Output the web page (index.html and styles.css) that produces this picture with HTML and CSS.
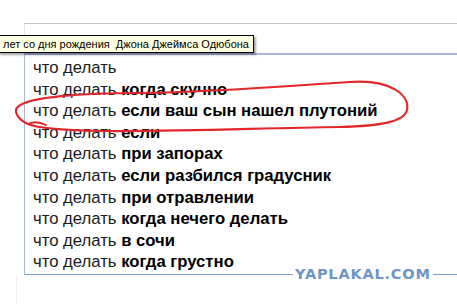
FILE: index.html
```html
<!DOCTYPE html>
<html lang="ru">
<head>
  <meta charset="UTF-8">
  <title>что делать</title>
  <link rel="stylesheet" href="styles.css">
</head>
<body>
  <div class="page">
    <div class="field"></div>
    <ul class="suggest">
      <li>что делать</li>
      <li>что делать <b>когда скучно</b></li>
      <li>что делать <b>если ваш сын нашел плутоний</b></li>
      <li>что делать <b>если</b></li>
      <li>что делать <b>при запорах</b></li>
      <li>что делать <b>если разбился градусник</b></li>
      <li>что делать <b>при отравлении</b></li>
      <li>что делать <b>когда нечего делать</b></li>
      <li>что делать <b>в сочи</b></li>
      <li>что делать <b>когда грустно</b></li>
    </ul>
    <div class="below"></div>

    <div class="tooltip">лет со дня рождения&nbsp; Джона Джеймса Одюбона</div>

    <svg class="scribble" width="457" height="304" viewBox="0 0 457 304">
      <path d="M19 106 C30 97 80 93 140 93 C220 92 300 85 350 82 C392 79 410 96 407 110 C404 122 380 126 340 127 C260 128 180 132 100 131 C60 130 36 128 28 124 C18 120 12 110 19 106"
        fill="none" stroke="#e3262a" stroke-width="2.2" stroke-linecap="round" stroke-linejoin="round"/>
      <path d="M28 124 C34 121 40 122 46 125" fill="none" stroke="#e3262a" stroke-width="1.8" stroke-linecap="round"/>
    </svg>

    <div class="watermark">YAPLAKAL.COM</div>
  </div>
</body>
</html>
```

FILE: styles.css
```css
* { box-sizing: border-box; margin: 0; padding: 0; }
body { background: #fff; font-family: 'Liberation Sans', Arial, sans-serif; }
.page { position: relative; width: 457px; height: 304px; overflow: hidden; }
.field {
  margin: 23px 0 0 24px;
  height: 30px;
  border-top: 1px solid #c4c4c4;
  border-left: 1px solid #e4e4e4;
}
.suggest {
  list-style: none;
  margin-left: 24px;
  border-top: 2px solid #a8b4dc;
  border-left: 1px solid #a8b4dc;
  border-bottom: 1px solid #7fa2d0;
  padding: 2px 0 1px 8px;
}
.suggest li {
  font-size: 16.7px;
  line-height: 21.6px;
  color: #1a1a1a;
  white-space: nowrap;
}
.suggest b { font-weight: bold; color: #000; }
.below {
  margin-left: 16px;
  height: 40px;
  border-left: 1px solid #eeeeee;
}
.tooltip {
  position: absolute;
  left: -2px;
  top: 35px;
  height: 18px;
  padding: 0 4px;
  background: #ffffe1;
  border: 1px solid #000;
  box-shadow: 2px 2px 2px rgba(0,0,0,0.35);
  font-size: 11px;
  line-height: 16px;
  color: #000;
  white-space: nowrap;
}
.scribble { position: absolute; left: 0; top: 0; pointer-events: none; }
.watermark {
  position: absolute;
  left: 293px;
  top: 267px;
  padding: 0 2px;
  background: #fff;
  color: #6d95c6;
  font-family: 'DejaVu Sans', Verdana, sans-serif;
  font-weight: bold;
  font-size: 14.5px;
  line-height: 14px;
  letter-spacing: 0.8px;
}
```
